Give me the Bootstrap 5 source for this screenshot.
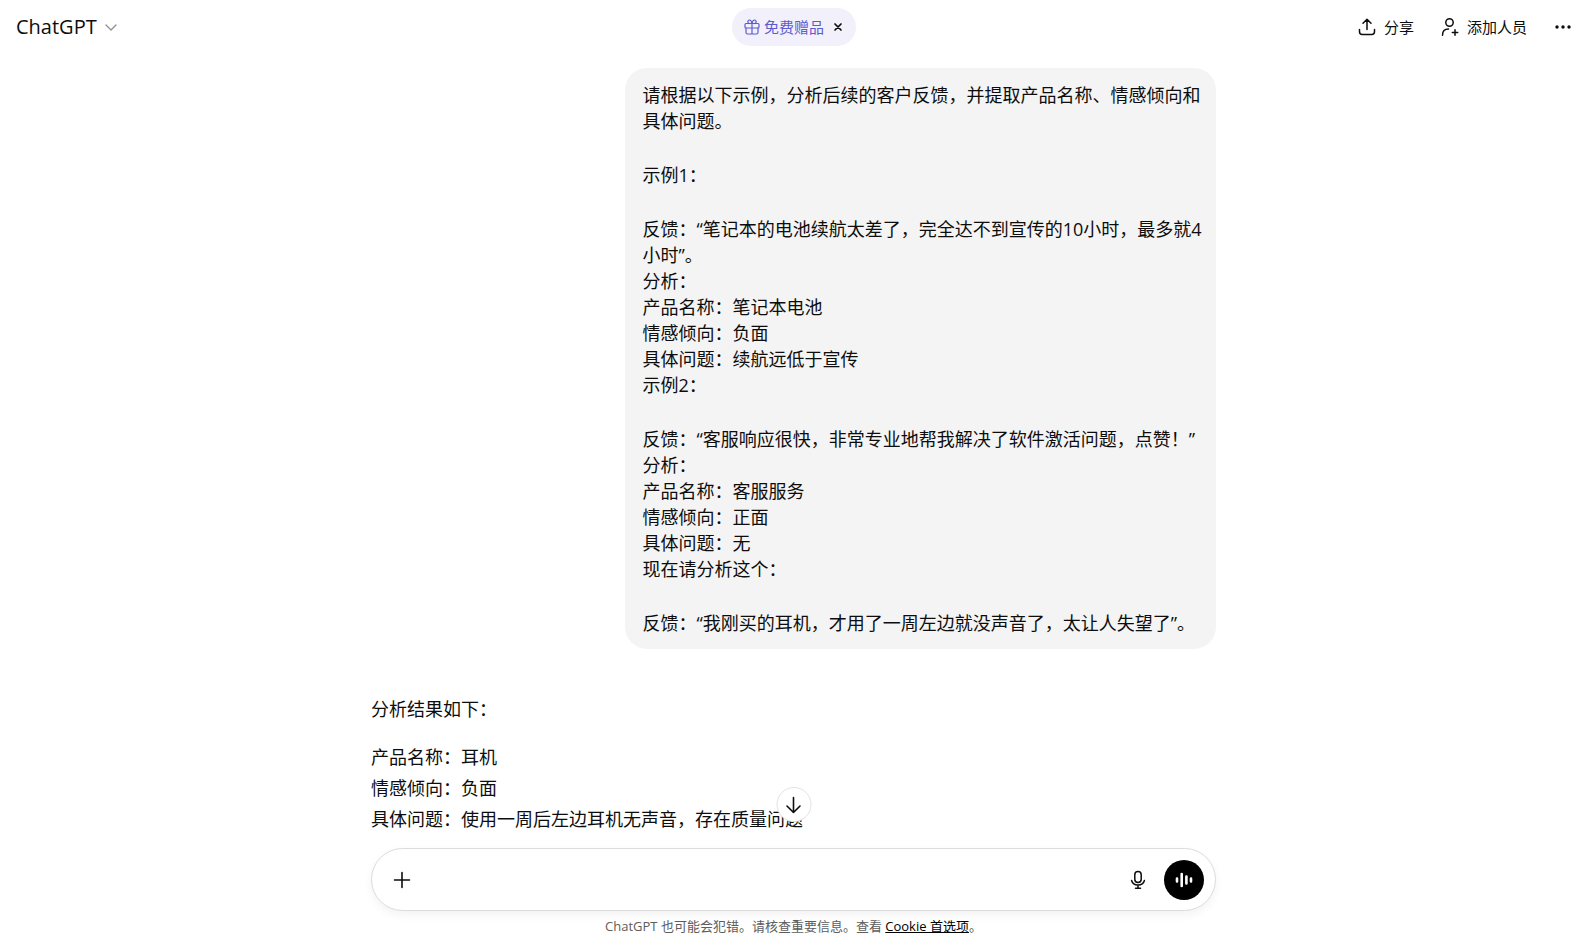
<!DOCTYPE html>
<html lang="zh-CN">
<head>
<meta charset="utf-8">
<meta name="viewport" content="width=device-width, initial-scale=1">
<title>ChatGPT</title>
<link href="https://cdn.jsdelivr.net/npm/bootstrap@5.3.0/dist/css/bootstrap.min.css" rel="stylesheet">
<style>
  body { font-family: "Open Sans", "Noto Sans CJK SC", sans-serif; font-size: 18px; line-height: 26px; color: #0d0d0d; }
  svg { display: block; fill: none; stroke: currentColor; stroke-linecap: round; stroke-linejoin: round; }
  button { color: inherit; }
  .topbar { display: grid; grid-template-columns: 1fr auto 1fr; height: 54px; padding: 0 3px 0 16px; }
  .model-btn { font-size: 20px; justify-self: start; }
  .model-btn svg { color: #8f8f8f; }
  .gift-pill { height: 38px; padding: 0 12px; background: #f1f0fb; color: #5d5bd0; font-size: 15px; }
  .gift-pill .close-x { color: #0d0d0d; }
  .actions { gap: 27px; font-size: 15px; }
  .page-col { padding-left: 12px; }
  .thread-area { padding-top: 14px; }
  .thread { max-width: 845px; }
  .bubble { width: 70%; background: #f4f4f4; border-radius: 22px; padding: 14px 8px 13px 18px; white-space: pre-line; }
  .bubble p { margin-bottom: 28px; }
  .reply { margin-top: 45px; line-height: 31px; }
  .reply p { margin-bottom: 17px; }
  .composer { height: 63px; border: 1px solid #dcdcdc; border-radius: 32px; padding: 0 11px 0 21px; background: #fff; box-shadow: 0 4px 10px rgba(0, 0, 0, .05); }
  .composer input { outline: 0; min-width: 0; }
  .voice-btn { width: 40px; height: 40px; background: #000; color: #fff; }
  .scroll-btn { width: 35px; height: 35px; bottom: 89px; border: 1px solid #e3e3e3; }
  .composer-note { padding: 6px 0; font-size: 13px; line-height: 19px; color: #5d5d5d; }
</style>
</head>
<body class="vh-100 d-flex flex-column overflow-hidden bg-white">
<header class="topbar align-items-center flex-shrink-0">
  <button type="button" class="model-btn border-0 bg-transparent p-0 d-flex align-items-center gap-2">
    ChatGPT
    <svg width="12" height="12" viewBox="0 0 12 12" stroke-width="1.3"><path d="M1 4l5 5 5-5"/></svg>
  </button>
  <div class="gift-pill rounded-pill d-flex align-items-center">
    <button type="button" class="border-0 bg-transparent p-0 d-flex align-items-center gap-1">
      <svg width="16" height="16" viewBox="0 0 16 16" stroke-width="1.2"><rect x="1" y="4.500" width="14" height="4.500" rx="1"/><path d="M2 9v4.500q0 1.500 1.500 1.500h9q1.500 0 1.500-1.500V9M8 4.500V15M8 4.500C7.600 2.200 6.700 1 5.500 1 3.600 1 3.200 3.600 5 4.500M8 4.500C8.400 2.200 9.300 1 10.500 1c1.900 0 2.300 2.600.500 3.500"/></svg>
      <span>免费赠品</span>
    </button>
    <button type="button" class="close-x border-0 bg-transparent p-0 ms-2" aria-label="关闭">
      <svg width="12" height="12" viewBox="0 0 12 12" stroke-width="1.7"><path d="M3 3l6 6M9 3L3 9"/></svg>
    </button>
  </div>
  <div class="actions d-flex align-items-center justify-content-end">
    <button type="button" class="border-0 bg-transparent p-0 d-flex align-items-center gap-2">
      <svg width="18" height="18" viewBox="0 0 18 18" stroke-width="1.500"><path d="M9 11.500V1.500M5 5.200l4-3.900 4 3.900M1.500 11.500v2.300q0 2.700 2.700 2.700h9.600q2.700 0 2.700-2.700v-2.300"/></svg>
      分享
    </button>
    <button type="button" class="border-0 bg-transparent p-0 d-flex align-items-center gap-2">
      <svg width="18" height="18" viewBox="0 0 18 18" stroke-width="1.500"><circle cx="8.500" cy="4.500" r="3.700"/><path d="M1.500 17.200c0-4 2.300-6.200 6-6.200M14 11.800v5.400M11.300 14.500h5.400"/></svg>
      添加人员
    </button>
    <button type="button" class="border-0 bg-transparent p-0" aria-label="更多">
      <svg width="18" height="18" viewBox="0 0 18 18"><g fill="currentColor" stroke="none"><circle cx="3" cy="9" r="1.700"/><circle cx="9" cy="9" r="1.700"/><circle cx="15" cy="9" r="1.700"/></g></svg>
    </button>
  </div>
</header>

<main class="page-col thread-area flex-grow-1 overflow-hidden">
  <div class="thread mx-auto">
    <div class="bubble ms-auto"><p>请根据以下示例，分析后续的客户反馈，并提取产品名称、情感倾向和具体问题。</p><p>示例1：</p><p>反馈：“笔记本的电池续航太差了，完全达不到宣传的10小时，最多就4小时”。
分析：
产品名称：笔记本电池
情感倾向：负面
具体问题：续航远低于宣传
示例2：</p><p>反馈：“客服响应很快，非常专业地帮我解决了软件激活问题，点赞！”
分析：
产品名称：客服服务
情感倾向：正面
具体问题：无
现在请分析这个：</p><p class="mb-0">反馈：“我刚买的耳机，才用了一周左边就没声音了，太让人失望了”。</p></div>
    <div class="reply">
      <p>分析结果如下：</p>
      <p>产品名称：耳机<br>情感倾向：负面<br>具体问题：使用一周后左边耳机无声音，存在质量问题</p>
    </div>
  </div>
</main>

<footer class="page-col bg-white position-relative flex-shrink-0">
  <div class="thread mx-auto position-relative">
    <button type="button" class="scroll-btn rounded-circle bg-white p-0 position-absolute start-50 translate-middle-x d-flex align-items-center justify-content-center" aria-label="滚动到底部">
      <svg width="18" height="18" viewBox="0 0 18 18" stroke-width="1.600"><path d="M9 1.500v15M2.500 10L9 16.500 15.500 10"/></svg>
    </button>
    <form class="composer d-flex align-items-center">
      <button type="button" class="border-0 bg-transparent p-0" aria-label="添加">
        <svg width="18" height="18" viewBox="0 0 18 18" stroke-width="1.600"><path d="M9 1.500v15M1.500 9h15"/></svg>
      </button>
      <input type="text" class="flex-grow-1 border-0 bg-transparent mx-2" aria-label="消息">
      <button type="button" class="border-0 bg-transparent p-0 me-3" aria-label="听写">
        <svg width="20" height="20" viewBox="0 0 20 20" stroke-width="1.500"><rect x="6.800" y="1.500" width="6.400" height="11" rx="3.200"/><path d="M3.600 10.500c.800 3 3.200 4.500 6.400 4.500s5.600-1.500 6.400-4.500M10 15v3M7.500 18.300h5"/></svg>
      </button>
      <button type="button" class="voice-btn border-0 rounded-circle p-0 d-flex align-items-center justify-content-center" aria-label="语音模式">
        <svg width="20" height="20" viewBox="0 0 20 20" stroke-width="2.600"><path d="M3 8.500v3M7.700 4v12M12.400 6.500v7M17 8.500v3"/></svg>
      </button>
    </form>
  </div>
  <div class="composer-note text-center">ChatGPT 也可能会犯错。请核查重要信息。查看 <a href="#" class="link-dark text-black">Cookie 首选项</a>。</div>
</footer>
<script src="https://cdn.jsdelivr.net/npm/bootstrap@5.3.0/dist/js/bootstrap.bundle.min.js"></script>
</body>
</html>
